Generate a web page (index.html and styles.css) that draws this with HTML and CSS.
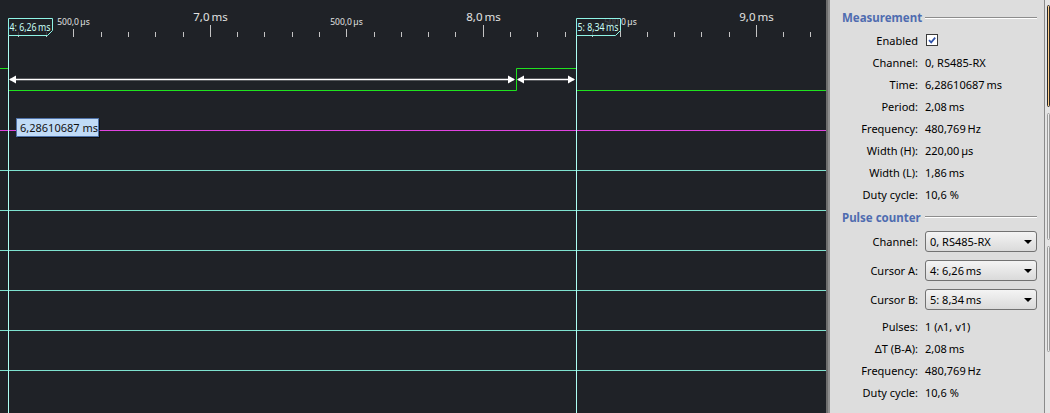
FILE: index.html
```html
<!DOCTYPE html>
<html>
<head>
<meta charset="utf-8">
<link rel="stylesheet" href="styles.css">
</head>
<body>
<div class="app">
  <div class="scope">
    <svg width="826" height="413" viewBox="0 0 826 413">
      <path class="tick" d="M18.5 32V37M46.5 32V37M101.5 32V37M128.5 32V37M155.5 32V37M183.5 32V37M237.5 32V37M264.5 32V37M292.5 32V37M319.5 32V37M374.5 32V37M401.5 32V37M428.5 32V37M455.5 32V37M510.5 32V37M537.5 32V37M565.5 32V37M592.5 32V37M647.5 32V37M674.5 32V37M701.5 32V37M729.5 32V37M783.5 32V37M810.5 32V37M73.5 29V37M346.5 29V37M620.5 29V37M210.5 25V37M483.5 25V37M756.5 25V37"/>
      <text class="lbl-major" x="210.5" y="21">7,0&#8201;ms</text>
      <text class="lbl-major" x="483.5" y="21">8,0&#8201;ms</text>
      <text class="lbl-major" x="756.5" y="21">9,0&#8201;ms</text>
      <text class="lbl-minor" x="73.5" y="25">500,0&#8201;µs</text>
      <text class="lbl-minor" x="346.5" y="25">500,0&#8201;µs</text>
      <text class="lbl-minor" x="620.5" y="25">500,0&#8201;µs</text>

      <path class="grid" d="M0 170.5H826M0 210.5H826M0 250.5H826M0 290.5H826M0 330.5H826M0 370.5H826"/>
      <path class="magenta" d="M0 130.5H826"/>
      <path class="signal" d="M0 68.5H8.5V90.5H516.5V68.5H576.5V90.5H826"/>

      <path class="arrow" d="M10 79.5H514M518 79.5H574"/>
      <polygon class="arrowhead" points="9,79.5 16,75.5 16,83.5"/>
      <polygon class="arrowhead" points="515,79.5 508,75.5 508,83.5"/>
      <polygon class="arrowhead" points="517,79.5 524,75.5 524,83.5"/>
      <polygon class="arrowhead" points="575,79.5 568,75.5 568,83.5"/>

      <path class="cursor" d="M8.5 35V413M576.5 35V413"/>
      <path class="cbox" d="M8.5 18.5H52.5V30.5L47.5 35.5H8.5Z"/>
      <text class="clabel" x="9.5" y="31" textLength="41" lengthAdjust="spacingAndGlyphs">4: 6,26&#8201;ms</text>
      <path class="cbox" d="M576.5 18.5H620.5V30.5L615.5 35.5H576.5Z"/>
      <text class="clabel" x="577.5" y="31" textLength="41" lengthAdjust="spacingAndGlyphs">5: 8,34&#8201;ms</text>

      <rect class="tip-shadow" x="18" y="120" width="82" height="18"/>
      <rect class="tip" x="16.5" y="118.5" width="82" height="18"/>
      <text class="tip-text" x="20" y="132">6,28610687 ms</text>
    </svg>
  </div>
  <div class="splitter"></div>
  <div class="panel">
    <div class="head">
      <span class="title">Measurement</span>
      <span class="rule"></span>
    </div>
    <div class="row"><span class="lbl">Enabled</span><span class="val"><span class="check"><svg width="10" height="10" viewBox="0 0 10 10"><path d="M2 5.2L4.2 7.4L8.2 2.6"/></svg></span></span></div>
    <div class="row"><span class="lbl">Channel:</span><span class="val">0, RS485-RX</span></div>
    <div class="row"><span class="lbl">Time:</span><span class="val">6,28610687&#8201;ms</span></div>
    <div class="row"><span class="lbl">Period:</span><span class="val">2,08&#8201;ms</span></div>
    <div class="row"><span class="lbl">Frequency:</span><span class="val">480,769&#8201;Hz</span></div>
    <div class="row"><span class="lbl">Width (H):</span><span class="val">220,00&#8201;µs</span></div>
    <div class="row"><span class="lbl">Width (L):</span><span class="val">1,86&#8201;ms</span></div>
    <div class="row"><span class="lbl">Duty cycle:</span><span class="val">10,6 %</span></div>
    <div class="head head-pc">
      <span class="title">Pulse counter</span>
      <span class="rule"></span>
    </div>
    <div class="row combo-row first"><span class="lbl">Channel:</span><span class="combo">0, RS485-RX<i class="caret"></i></span></div>
    <div class="row combo-row"><span class="lbl">Cursor A:</span><span class="combo">4: 6,26&#8201;ms<i class="caret"></i></span></div>
    <div class="row combo-row"><span class="lbl">Cursor B:</span><span class="combo">5: 8,34&#8201;ms<i class="caret"></i></span></div>
    <div class="row after-combo"><span class="lbl">Pulses:</span><span class="val">1 (ʌ1, v1)</span></div>
    <div class="row"><span class="lbl">ΔT (B-A):</span><span class="val">2,08&#8201;ms</span></div>
    <div class="row"><span class="lbl">Frequency:</span><span class="val">480,769&#8201;Hz</span></div>
    <div class="row"><span class="lbl">Duty cycle:</span><span class="val">10,6 %</span></div>
  </div>
  <div class="vline"></div>
  <div class="side">
    <div class="sbox orange"></div>
    <div class="sbox gray1"></div>
    <div class="sbox gray2"></div>
  </div>
</div>
</body>
</html>
```

FILE: styles.css
```css
html, body {
  margin: 0;
  padding: 0;
}
body {
  width: 1050px;
  height: 413px;
  overflow: hidden;
  background: #dddddd;
}
.app {
  display: flex;
  height: 413px;
}
.scope {
  flex: none;
  width: 826px;
  height: 413px;
  background: #1f2227;
}
.scope svg {
  display: block;
}
.tick {
  stroke: #c4c4c4;
  stroke-width: 1;
  fill: none;
}
.lbl-major {
  font-family: "Noto Sans", sans-serif;
  font-size: 11.5px;
  fill: #e2e2e2;
  text-anchor: middle;
}
.lbl-minor {
  font-family: "Noto Sans", sans-serif;
  font-size: 8.5px;
  fill: #e2e2e2;
  text-anchor: middle;
}
.grid {
  stroke: #7ee2cf;
  stroke-width: 1;
  fill: none;
}
.magenta {
  stroke: #e043e0;
  stroke-width: 1;
  fill: none;
}
.signal {
  stroke: #1fe21f;
  stroke-width: 1;
  fill: none;
}
.arrow {
  stroke: #ffffff;
  stroke-width: 1.3;
  fill: none;
}
.arrowhead {
  fill: #ffffff;
}
.cursor {
  stroke: #aefff4;
  stroke-width: 1;
  fill: none;
}
.cbox {
  fill: rgba(31, 34, 39, 0.8);
  stroke: #8ff4e6;
  stroke-width: 1;
}
.clabel {
  font-family: "Noto Sans", sans-serif;
  font-size: 10px;
  fill: #c9fff6;
}
.tip-shadow {
  fill: rgba(0, 0, 0, 0.55);
}
.tip {
  fill: #c0dbf7;
  stroke: #4f72a8;
  stroke-width: 1;
}
.tip-text {
  font-family: "Noto Sans", sans-serif;
  font-size: 11px;
  fill: #111111;
}

.splitter {
  flex: none;
  width: 4px;
  box-sizing: border-box;
  background: #8f8f8f;
  border-left: 2px solid #6f6f6f;
}
.panel {
  flex: none;
  width: 214px;
  box-sizing: border-box;
  padding-top: 6px;
  background: #dddddd;
  font-family: "Noto Sans", sans-serif;
  font-size: 11px;
  color: #000000;
}
.head, .row {
  display: grid;
  grid-template-columns: 88px 1fr;
  column-gap: 7px;
  align-items: center;
  padding-right: 7px;
}
.head {
  height: 23px;
}
.head-pc {
  height: 24px;
}
.title {
  padding-left: 12px;
  font-size: 11.5px;
  font-weight: bold;
  color: #4f6cb0;
  white-space: nowrap;
}
.rule {
  display: block;
  height: 1px;
  background: #8d8d8d;
  border-bottom: 1px solid #ffffff;
}
.row {
  height: 22px;
  white-space: nowrap;
}
.lbl {
  text-align: right;
}
.check {
  display: flex;
  align-items: center;
  justify-content: center;
  width: 12px;
  height: 12px;
  box-sizing: border-box;
  margin-left: 1px;
  background: #ffffff;
  border: 1px solid #3a3a3a;
}
.check path {
  fill: none;
  stroke: #2f52a8;
  stroke-width: 1.7;
}
.combo-row {
  height: 21px;
  margin-top: 8px;
}
.combo-row.first {
  margin-top: 2px;
}
.after-combo {
  margin-top: 5px;
}
.combo {
  display: flex;
  align-items: center;
  height: 21px;
  box-sizing: border-box;
  padding-left: 4px;
  padding-right: 4px;
  border: 1px solid #727272;
  border-radius: 3px;
  background: linear-gradient(#f4f4f4, #dadada);
}
.caret {
  margin-left: auto;
  width: 0;
  height: 0;
  border-left: 4px solid transparent;
  border-right: 4px solid transparent;
  border-top: 4px solid #000000;
}
.vline {
  flex: none;
  width: 1px;
  background: #8a8a8a;
}
.side {
  flex: 1;
  display: flex;
  flex-direction: column;
  background: #e4e4e4;
  padding-top: 5px;
  padding-left: 2px;
}
.sbox {
  box-sizing: border-box;
  border-radius: 2px;
  margin-bottom: 6px;
}
.orange {
  height: 102px;
  background: #ffcf8c;
  border: 1px solid #2a2a2a;
}
.gray1 {
  height: 127px;
  background: #ececec;
  border: 1px solid #9a9a9a;
}
.gray2 {
  height: 106px;
  background: #ececec;
  border: 1px solid #9a9a9a;
}
```
